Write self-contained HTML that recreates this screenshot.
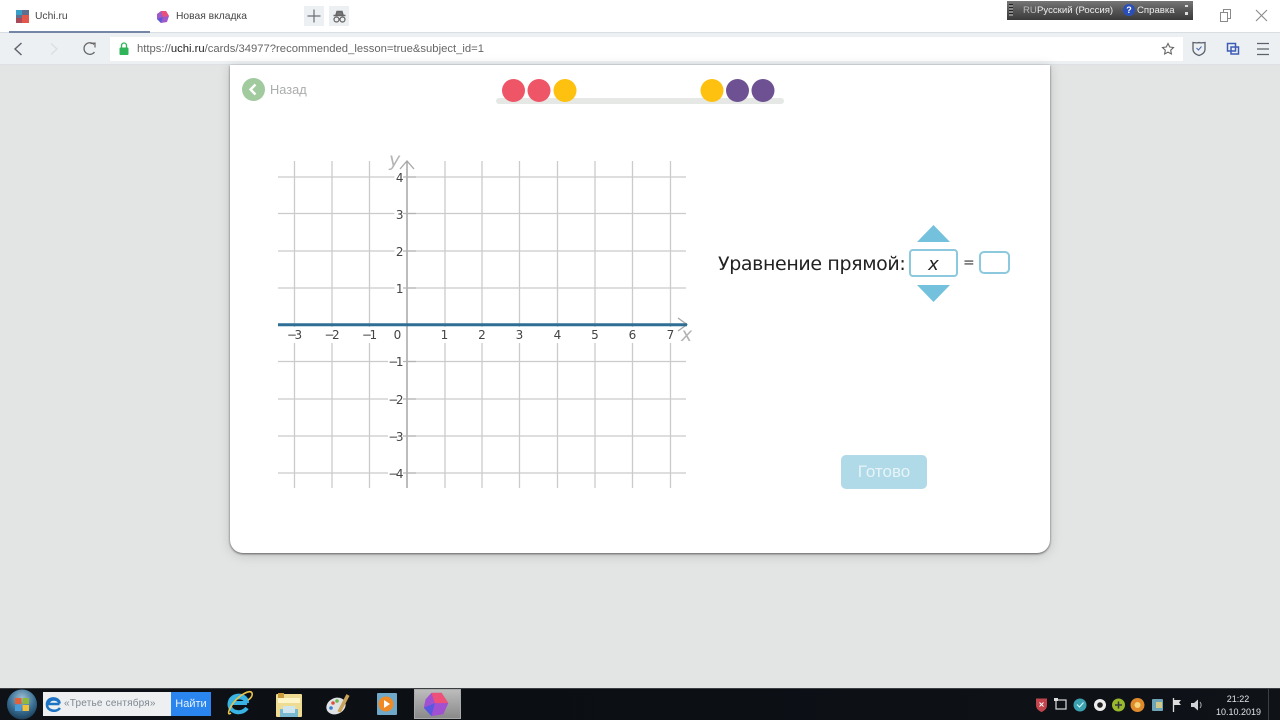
<!DOCTYPE html>
<html lang="ru"><head><meta charset="utf-8"><title>Uchi.ru</title>
<style>
html,body{margin:0;padding:0;width:1280px;height:720px;overflow:hidden;background:#e3e5e4;font-family:"Liberation Sans","DejaVu Sans",sans-serif}
.a{position:absolute;white-space:nowrap}
svg{position:absolute;overflow:visible}
.m{letter-spacing:-2.500px}
</style></head><body>
<!-- browser chrome -->
<div class="a" style="left:0;top:0;width:1280px;height:32px;background:#fff"></div>
<div class="a" style="left:0;top:32px;width:1280px;height:33px;background:#edf0f3;border-top:1px solid #d9dee3;box-sizing:border-box"></div>
<div class="a" style="left:9px;top:31px;width:141px;height:2px;background:#7585a5"></div>
<div class="a" style="left:110px;top:37px;width:1073px;height:24px;background:#fff"></div>
<div class="a" style="left:0;top:64px;width:1280px;height:1px;background:#dde1e4"></div>
<!-- tabs -->
<svg style="left:16px;top:10px" width="13" height="13" viewBox="0 0 13 13"><rect width="13" height="13" fill="#5f6f8f"/><rect x="0" y="0" width="6" height="5" fill="#38a0c8"/><rect x="6" y="5" width="7" height="8" fill="#e2574c"/><rect x="0" y="8" width="6" height="5" fill="#a84a58"/></svg>
<div class="a" style="left:35px;top:10px;font-size:10.300px;line-height:14px;color:#444">Uchi.ru</div>
<svg style="left:157px;top:11px" width="12" height="12" viewBox="0 0 12 12"><polygon points="4,0 9,0 12,5 10,11 4,12 0,8 0,3" fill="#a05ac8"/><polygon points="4,0 9,0 12,5 6,6" fill="#e8527a"/><polygon points="0,8 6,6 4,12" fill="#5a5ad8"/></svg>
<div class="a" style="left:176px;top:10px;font-size:10.300px;line-height:14px;color:#444">Новая вкладка</div>
<div class="a" style="left:304px;top:6px;width:20px;height:20px;background:#edf0f3"></div>
<div class="a" style="left:329px;top:6px;width:20px;height:20px;background:#edf0f3"></div>
<svg style="left:304px;top:6px" width="20" height="20"><path d="M10 3.500V16.500M3.500 10H16.500" stroke="#6a6f76" stroke-width="1.200" fill="none"/></svg>
<svg style="left:329px;top:6px" width="20" height="20" fill="none" stroke="#666"><path d="M4.500 9.500H16.500M7 9L8 5.500H13L14 9" stroke-width="1.400" fill="#777"/><circle cx="7.500" cy="13.500" r="2.500" stroke-width="1.200"/><circle cx="13.500" cy="13.500" r="2.500" stroke-width="1.200"/></svg>
<!-- nav -->
<svg style="left:10px;top:40px" width="100" height="18" fill="none"><path d="M11.500 3L5 9L11.500 15" stroke="#5c6269" stroke-width="1.400"/><path d="M41 3.500L47 9L41 14.500" stroke="#dcdfe2" stroke-width="1.400"/><path d="M84 4.500A5.800 5.800 0 1 0 84.500 12" stroke="#666" stroke-width="1.300"/><path d="M80.500 3.500L85 3V7.500" stroke="#666" stroke-width="1.200"/></svg>
<svg style="left:118px;top:42px" width="13" height="14"><rect x="1.500" y="5.500" width="9" height="7.500" rx="1" fill="#30b45a"/><path d="M3.500 6V3.500a2.500 2.500 0 0 1 5 0V6" stroke="#30b45a" stroke-width="1.300" fill="none"/></svg>
<div class="a" style="left:137px;top:42px;font-size:11.270px;line-height:14px;color:#666">https://<span style="color:#222">uchi.ru</span>/cards/34977?recommended_lesson=true&amp;subject_id=1</div>
<svg style="left:1160px;top:41px" width="110" height="16" fill="none"><polygon points="8,2.500 9.700,6 13.500,6.500 10.700,9.200 11.400,13 8,11.100 4.600,13 5.300,9.200 2.500,6.500 6.300,6" stroke="#666" stroke-width="1.100"/><path d="M33 1.500C36 2 38 2 39 1.500C40 2 42 2 45 1.500V8.500C45 11.500 42 13.500 39 14.500C36 13.500 33 11.500 33 8.500Z" stroke="#59616c" stroke-width="1.300"/><path d="M36.500 7L38.500 9L41.500 5.500" stroke="#4566b0" stroke-width="1"/><rect x="67.500" y="2.500" width="8" height="7.500" stroke="#3c5cb5" stroke-width="1.500"/><rect x="71" y="6" width="7.500" height="7" stroke="#3c5cb5" stroke-width="1.500"/><path d="M97 2.500H109M97 8H109M97 13.500H109" stroke="#5c6269" stroke-width="1.200"/></svg>
<!-- window buttons -->
<svg style="left:1215px;top:6px" width="60" height="20" fill="none" stroke="#8a8a8a"><rect x="5.500" y="6.500" width="7" height="9"/><path d="M8.500 6V3.500H15.500V12.500H13"/><path d="M41 4L52 15M52 4L41 15" stroke-width="1.100"/></svg>
<!-- lang bar -->
<div class="a" style="left:1007px;top:1px;width:186px;height:19px;background:linear-gradient(#777,#555 50%,#3a3a3a);color:#eee;font-size:9.600px;line-height:19px"><span class="a" style="left:16px;color:#bbb">RU</span><span class="a" style="left:30px">Русский (Россия)</span><span class="a" style="left:116px;top:3px;width:12px;height:12px;border-radius:50%;background:#2a50b8;font:bold 9px/12px 'Liberation Sans';text-align:center;color:#fff">?</span><span class="a" style="left:130px">Справка</span><span class="a" style="left:178px;top:4px;width:3px;height:2px;background:#ddd"></span><span class="a" style="left:178px;top:11px;width:3px;height:3px;background:#ddd"></span><span class="a" style="left:2px;top:3px;width:4px;height:12px;background:repeating-linear-gradient(#222 0 1px,#888 1px 3px)"></span></div>
<!-- card -->
<div class="a" style="left:230px;top:65px;width:820px;height:488px;background:#fff;border-radius:0 0 13px 13px;box-shadow:0 1px 2px rgba(0,0,0,.55),0 2px 12px rgba(0,0,0,.16)"></div>
<svg style="left:242px;top:78px" width="24" height="24"><circle cx="11.500" cy="11.500" r="11.500" fill="#a1cb9f"/><path d="M13.500 6.500L8.500 11.500L13.500 16.500" stroke="#fff" stroke-width="2.400" fill="none"/></svg>
<div class="a" style="left:270px;top:83px;font-size:12.800px;line-height:14px;color:#a9adab">Назад</div>
<!-- progress -->
<div class="a" style="left:496px;top:98px;width:288px;height:6px;border-radius:3px;background:#e6e8e5"></div>
<svg style="left:490px;top:70px" width="300" height="40"><ellipse cx="23.500" cy="20.500" rx="11.500" ry="11.500" fill="#ee5566"/><ellipse cx="49" cy="20.500" rx="11.500" ry="11.500" fill="#ee5566"/><ellipse cx="75" cy="20.500" rx="11.500" ry="11.500" fill="#fec110"/><ellipse cx="222" cy="20.500" rx="11.500" ry="11.500" fill="#fec110"/><ellipse cx="247.500" cy="20.500" rx="11.500" ry="11.500" fill="#6e5192"/><ellipse cx="273" cy="20.500" rx="11.500" ry="11.500" fill="#6e5192"/></svg>
<!-- graph -->
<svg style="left:0;top:0" width="1280" height="720" font-family="'DejaVu Sans','Liberation Sans',sans-serif" font-size="12" fill="#444">
<g stroke="#cbcbcb" stroke-width="1.300" fill="none">
<path d="M294.500 161V488M332 161V488M369.500 161V488M445 161V488M482 161V488M519.500 161V488M557.500 161V488M595 161V488M632.500 161V488M670.500 161V488"/>
<path d="M278 177H686M278 213.500H686M278 251H686M278 288H686M278 361.500H686M278 399H686M278 436H686M278 473H686"/>
</g>
<g fill="#fff"><rect x="394.500" y="168" width="12" height="18"/><rect x="394.500" y="205" width="12" height="18"/><rect x="394.500" y="242" width="12" height="18"/><rect x="394.500" y="279" width="12" height="18"/><rect x="286" y="327" width="390" height="16"/><rect x="388" y="353" width="18" height="17"/><rect x="388" y="390" width="18" height="17"/><rect x="388" y="427" width="18" height="17"/><rect x="388" y="464" width="18" height="17"/></g>
<path d="M407 161V488" stroke="#a6a6a6" stroke-width="1.500"/>
<path d="M403 177H416M403 213.500H416M403 251H416M403 288H416M403 361.500H416M403 399H416M403 436H416M403 473H416" stroke="#b4b4b4" stroke-width="1.300"/>
<path d="M400 169L407 161L414 169" stroke="#a6a6a6" stroke-width="1.300" fill="none"/>
<path d="M678 318L687 324.500L678 331" stroke="#a6a6a6" stroke-width="1.300" fill="none"/>
<path d="M278 324.800H687" stroke="#2f6f96" stroke-width="3"/>
<g text-anchor="middle">
<text x="294.500" y="339"><tspan class="m">−</tspan>3</text><text x="332" y="339"><tspan class="m">−</tspan>2</text><text x="369.500" y="339"><tspan class="m">−</tspan>1</text><text x="397.500" y="339">0</text><text x="444.500" y="339">1</text><text x="482" y="339">2</text><text x="519.500" y="339">3</text><text x="557.500" y="339">4</text><text x="595" y="339">5</text><text x="632.500" y="339">6</text><text x="670.500" y="339">7</text>
</g>
<g text-anchor="end">
<text x="403.500" y="182">4</text><text x="403.500" y="219">3</text><text x="403.500" y="256">2</text><text x="403.500" y="293">1</text><text x="403.500" y="366"><tspan class="m">−</tspan>1</text><text x="403.500" y="404"><tspan class="m">−</tspan>2</text><text x="403.500" y="441"><tspan class="m">−</tspan>3</text><text x="403.500" y="478"><tspan class="m">−</tspan>4</text>
</g>
<text x="389" y="166" font-size="19" font-style="italic" fill="#b4b4b4">y</text>
<text x="681" y="341" font-size="19" font-style="italic" fill="#b4b4b4">x</text>
</svg>
<!-- equation -->
<div class="a" style="left:718px;top:252px;font-family:'DejaVu Sans',sans-serif;font-size:19px;line-height:24px;color:#222;letter-spacing:-.37px">Уравнение прямой:</div>
<svg style="left:915px;top:222px" width="40" height="84"><polygon points="18.500,3 35,20 2,20" fill="#74c1de"/><polygon points="18.500,80 35,63 2,63" fill="#74c1de"/></svg>
<div class="a" style="left:909px;top:249px;width:49px;height:28px;box-sizing:border-box;border:2px solid #8cc8de;border-radius:4px;background:#fff;text-align:center;font-family:'DejaVu Sans',sans-serif;font-style:italic;font-size:18px;line-height:27px;color:#222">x</div>
<div class="a" style="left:963px;top:253px;font-family:'DejaVu Sans',sans-serif;font-size:14px;line-height:20px;color:#333">=</div>
<div class="a" style="left:979px;top:251px;width:31px;height:23px;box-sizing:border-box;border:2px solid #8cc8de;border-radius:5px;background:#fff"></div>
<!-- button -->
<div class="a" style="left:841px;top:455px;width:86px;height:34px;border-radius:5px;background:#b0dae8;color:#e6f4f8;font-family:'Liberation Sans',sans-serif;font-size:17px;line-height:34px;text-align:center">Готово</div>
<!-- taskbar -->
<div class="a" style="left:0;top:688px;width:1280px;height:32px;background:linear-gradient(90deg,#0e1116,#0b0f14 40%,#0f1318);border-top:1px solid #3c3f42;box-sizing:border-box"></div>
<svg style="left:5px;top:689px" width="32" height="31"><defs><radialGradient id="o" cx=".5" cy=".3" r=".7"><stop offset="0" stop-color="#9fc0d4"/><stop offset=".6" stop-color="#3a6f94"/><stop offset="1" stop-color="#1c3f5a"/></radialGradient></defs><circle cx="17" cy="15.500" r="15" fill="url(#o)"/><rect x="10" y="9" width="6.500" height="6" fill="#e2603a"/><rect x="17.500" y="9" width="6.500" height="6" fill="#8cb93e"/><rect x="10" y="16" width="6.500" height="6" fill="#4a9bd8"/><rect x="17.500" y="16" width="6.500" height="6" fill="#f2c13c"/></svg>
<div class="a" style="left:43px;top:692px;width:128px;height:24px;background:#edeff1;color:#7e8791;font-size:10px;line-height:24px"><span class="a" style="left:21px;letter-spacing:.2px">«Третье сентября»</span></div>
<svg style="left:45px;top:694px" width="18" height="20" fill="none"><path d="M14.500 10H3.500C3.500 4.500 13 3.500 14.500 9.500C14.500 3 2 2 2 10.500C2 17.500 11.500 18.500 15 14" stroke="#1d74c5" stroke-width="2.600"/></svg>
<div class="a" style="left:171px;top:692px;width:40px;height:24px;background:#2a86ee;color:#e9f3fd;font-size:11px;line-height:24px;text-align:center">Найти</div>
<svg style="left:225px;top:690px" width="30" height="28" fill="none"><path d="M22 13H8C8 6 20 5 22 13C22 3 5 3 4.500 14C4.500 23 17 25 22 18" stroke="#38b3e4" stroke-width="4"/><path d="M6 23C2 26 3 20 9 12C15 5 25 -1 27 3C28 6 25 9 23 10" stroke="#e8c24c" stroke-width="1.600"/></svg>
<svg style="left:275px;top:692px" width="28" height="26"><rect x="1" y="2" width="26" height="23" rx="1" fill="#efdc93"/><rect x="3" y="1" width="6" height="5" fill="#c89a3c"/><rect x="3" y="6" width="22" height="5" fill="#fdf4c8"/><rect x="5" y="17" width="18" height="8" fill="#7ab8d2"/><rect x="8" y="14" width="12" height="7" fill="#cfe6ee"/></svg>
<svg style="left:324px;top:691px" width="28" height="27"><ellipse cx="12" cy="15" rx="10" ry="8" fill="#dfe3e6" transform="rotate(-25 12 15)"/><circle cx="9" cy="12" r="1.800" fill="#e0503c"/><circle cx="13" cy="10" r="1.800" fill="#6cb84c"/><circle cx="7" cy="17" r="1.800" fill="#3c7cd0"/><path d="M15 21L24 4" stroke="#c9a35a" stroke-width="3.500"/></svg>
<svg style="left:376px;top:692px" width="22" height="24"><rect x="1" y="1" width="20" height="22" rx="1" fill="#6fa8c8"/><circle cx="10" cy="12" r="7.500" fill="#f08a24"/><polygon points="8,8 14,12 8,16" fill="#fff"/></svg>
<div class="a" style="left:414px;top:689px;width:47px;height:30px;box-sizing:border-box;border:1px solid #aaa;background:linear-gradient(#bcbcbc,#8a8a8a)"></div>
<svg style="left:423px;top:692px" width="27" height="25" viewBox="0 0 32 27" preserveAspectRatio="none"><polygon points="10,1 22,1 30,12 24,24 10,26 1,17 3,8" fill="#a050d0"/><polygon points="10,1 22,1 30,12 14,12" fill="#ee5078"/><polygon points="1,17 14,12 10,26" fill="#5858e0"/></svg>
<!-- tray -->
<svg style="left:1034px;top:696px" width="170" height="18"><path d="M2 2.500H13V9C13 13 10 15 7.500 16C5 15 2 13 2 9Z" fill="#c2444c"/><path d="M5.500 6.500L9.500 10.500M9.500 6.500L5.500 10.500" stroke="#fff"/><rect x="22" y="4" width="10" height="9" fill="none" stroke="#ddd" stroke-width="1.200"/><rect x="20" y="2" width="4" height="3" fill="#ddd"/><circle cx="46" cy="9" r="6.500" fill="#3ba0b0"/><path d="M43 8.500L45.500 11L49.500 6.500" stroke="#dff" fill="none"/><circle cx="66" cy="9" r="6" fill="#eee"/><circle cx="66" cy="9" r="2.800" fill="#222"/><circle cx="84.500" cy="9" r="6.500" fill="#9ab82c"/><path d="M81 9H88M84.500 5.500V12.500" stroke="#334" stroke-width="1.500"/><circle cx="103.500" cy="9" r="7" fill="#e08a2c"/><circle cx="103.500" cy="9" r="3" fill="#f4d47c"/><rect x="118" y="3" width="11" height="12" rx="1" fill="#6ea4b8"/><rect x="122" y="6" width="6" height="6" fill="#d0c98a"/><path d="M139.500 2V16" stroke="#ddd" stroke-width="1.300"/><path d="M140 4H147L145 6.500L147 9H140Z" fill="#ddd"/><path d="M157 7H160L164 3.500V14.500L160 11H157Z" fill="#cfd3d6"/><path d="M166 6C167.500 8 167.500 10 166 12" stroke="#aaa" fill="none"/></svg>
<div class="a" style="left:1216px;top:693px;width:44px;text-align:center;font-size:9px;line-height:13px;color:#dfe3e6">21:22<br>10.10.2019</div>
<div class="a" style="left:1268px;top:689px;width:1px;height:31px;background:#3c4046"></div>
</body></html>
